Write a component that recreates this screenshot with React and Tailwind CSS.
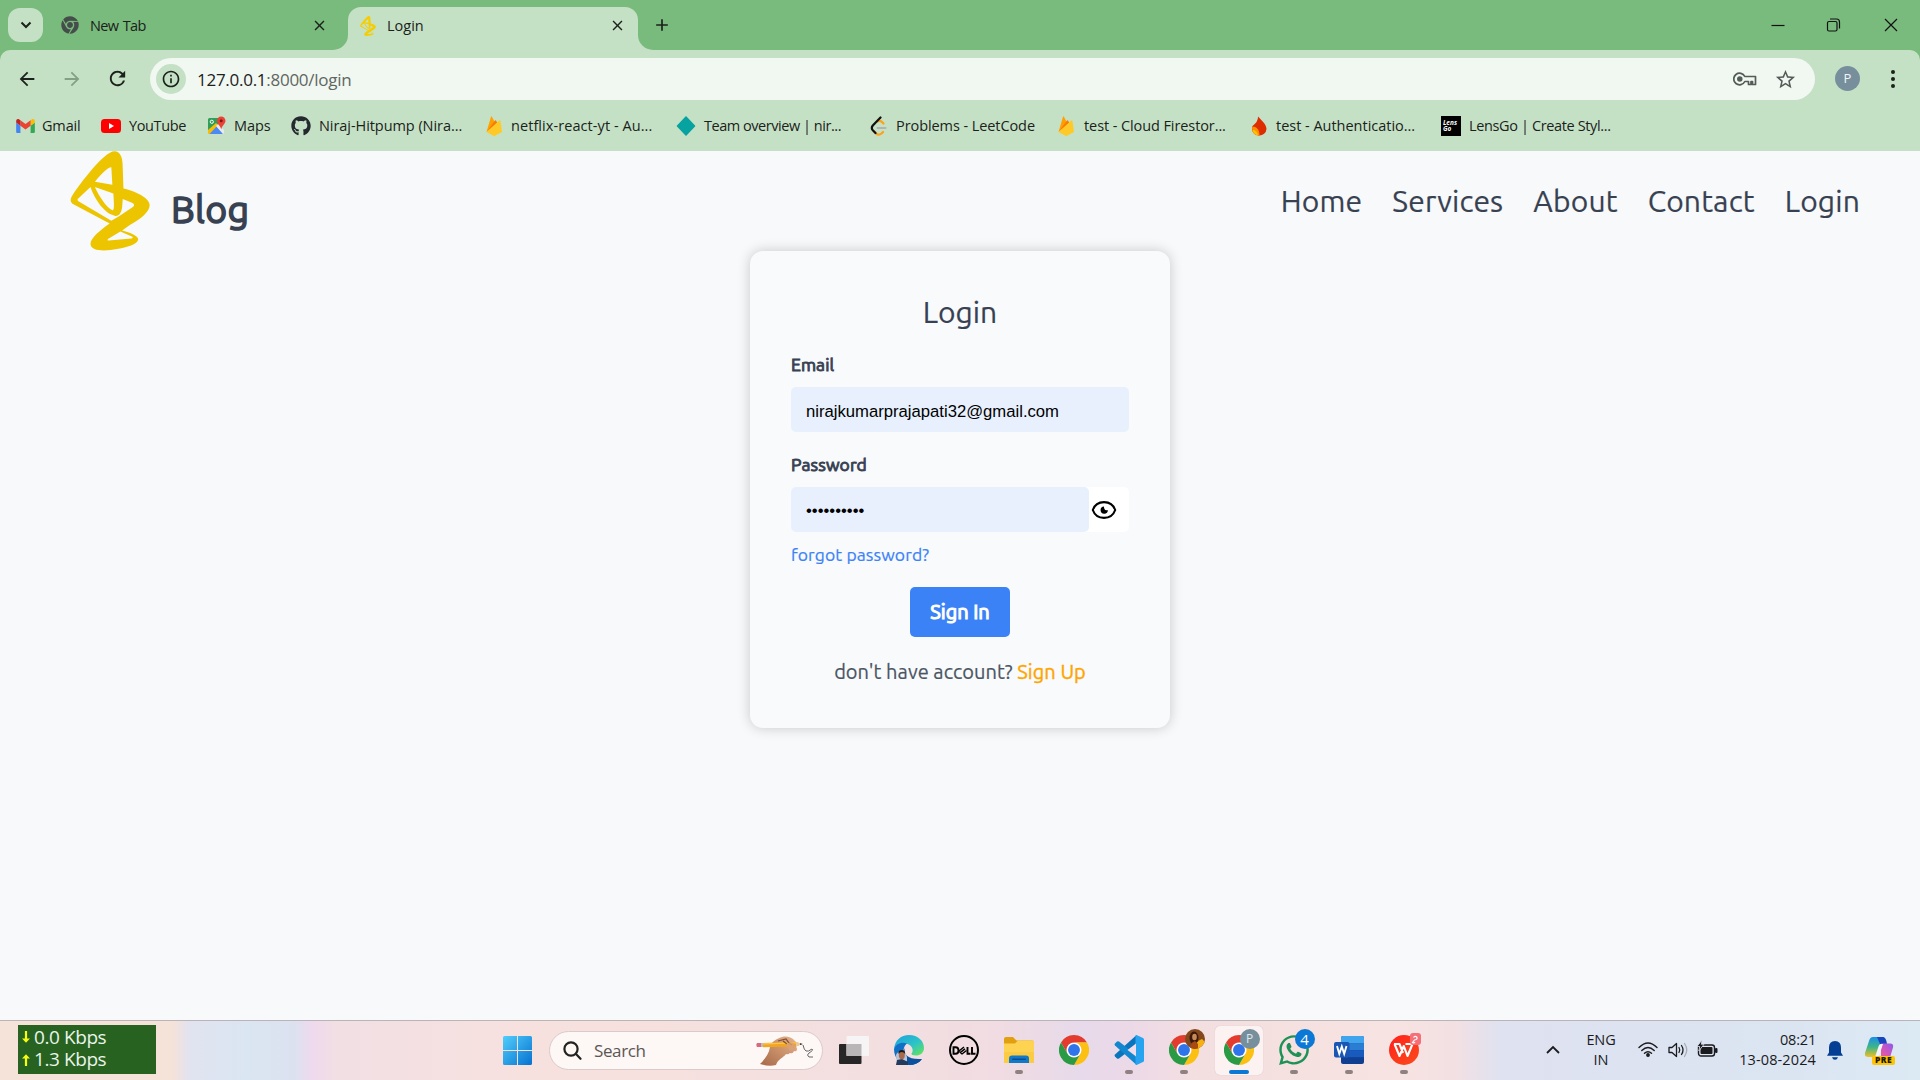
import React from 'react';
import { MdArrowBack, MdArrowForward, MdRefresh, MdInfoOutline, MdStarBorder, MdClose, MdAdd } from 'react-icons/md';
import { FaGithub, FaWhatsapp, FaChrome } from 'react-icons/fa';

const UI = "font-['Open_Sans','Noto_Sans',sans-serif]";

function Chrome({ size = 30 }) {
  return (
    <svg width={size} height={size} viewBox="0 0 48 48">
      <circle cx="24" cy="24" r="12" fill="#fff" />
      <path fill="#e33b2e" d="M24,12H44.7812a23.9939,23.9939,0,0,0-41.5639.0029L13.6079,30l.0093-.0024A11.9852,11.9852,0,0,1,24,12Z" />
      <path fill="#fcc012" d="M34.3913,30.0029,24.0007,48A23.994,23.994,0,0,0,44.78,12.0031H23.9989l-.0025.0093A11.985,11.985,0,0,1,34.3913,30.0029Z" />
      <path fill="#2a9a45" d="M13.6086,30.0031,3.218,12.006A23.994,23.994,0,0,0,24.0025,48L34.3931,30.0029l-.0067-.0068a11.9852,11.9852,0,0,1-20.7778.007Z" />
      <circle cx="24" cy="24" r="9.5" fill="#2f74ea" />
    </svg>
  );
}

function Logo({ color, className }) {
  return (
    <svg viewBox="61 17 238 302" preserveAspectRatio="none" className={className}>
      <path
        fill={color}
        fillRule="evenodd"
        d="M193 18C212 18 218 38 218 70L220 130C258 138 298 160 298 180C298 202 268 224 240 240L216 257C245 264 264 275 264 284C262 300 225 308 200 313C170 319 122 322 122 297C122 281 150 256 179 236L71 178C61 172 61 162 67 153C92 114 163 18 193 18Z
        M184 67C182 63 165 72 135 110L187 119Z
        M135 126C150 158 168 186 187 196C192 197 193 188 190 145Z
        M122 126L84 162Q82 166 86 169L184 228L208 213L248 186Q256 179 247 174L218 162L216 188C213 206 207 214 196 213C165 208 135 165 122 126Z
        M211 260L174 283Q171 287 176 287L244 281Q251 279 245 275Z"
      />
    </svg>
  );
}

function Gmail() {
  return (
    <svg width="19" height="14" viewBox="52 42 88 66">
      <path fill="#4285f4" d="M58 108h14V74L52 59v43c0 3.32 2.69 6 6 6" />
      <path fill="#34a853" d="M120 108h14c3.32 0 6-2.69 6-6V59l-20 15" />
      <path fill="#fbbc04" d="M120 48v26l20-15v-8c0-7.42-8.47-11.65-14.4-7.2" />
      <path fill="#ea4335" d="M72 74V48l24 18 24-18v26L96 92" />
      <path fill="#c5221f" d="M52 51v8l20 15V48l-5.6-4.2c-5.94-4.45-14.4-.22-14.4 7.2" />
    </svg>
  );
}

function YouTube() {
  return (
    <svg width="20" height="14" viewBox="0 0 20 14">
      <rect width="20" height="14" rx="3.5" fill="#f00" />
      <path d="M8 4v6l5-3z" fill="#fff" />
    </svg>
  );
}

function Maps() {
  return (
    <svg width="19" height="19" viewBox="0 0 19 19">
      <path d="M2.500 2H12v6l-4 3-7 6.500V3.500Q1 2 2.500 2z" fill="#2f9e58" />
      <path d="M1 14l8-7 3 3-8.500 8H2.500Q1 18 1 16.500z" fill="#fbbc04" />
      <path d="M9.500 10.500L16 17.500Q15.500 18 14.500 18H2.500z" fill="#4a8af4" />
      <path d="M11 8l6 6v3l-1 1-7-8z" fill="#e8eaed" />
      <circle cx="4.800" cy="5.800" r="1.600" fill="none" stroke="#fff" strokeWidth="1" />
      <path d="M14.200.5a4.300 4.300 0 0 1 4.300 4.300c0 3.200-3.500 4.500-4.300 8.700-.8-4.200-4.300-5.500-4.300-8.700A4.300 4.300 0 0 1 14.200.5z" fill="#ea4335" />
      <circle cx="14.200" cy="4.800" r="1.500" fill="#7b1c14" />
    </svg>
  );
}

function Firebase() {
  return (
    <svg width="16" height="20" viewBox="0 0 16 20">
      <path d="M.5 16L5 .8q.4-.9.900-.1L9 6.500z" fill="#ffa000" />
      <path d="M.5 16L9 4.500q.5-.6 1 0L12 8z" fill="#f57c00" />
      <path d="M.5 16L13.500 4.300q.7-.4.900.3L16 16l-7 3.800q-.8.400-1.600 0z" fill="#ffca28" />
    </svg>
  );
}

function Diamond() {
  return (
    <svg width="20" height="20" viewBox="0 0 20 20">
      <path d="M10 1l8.500 9-8.500 9-8.500-9z" fill="#06a3a0" stroke="#06a3a0" strokeWidth="1.500" strokeLinejoin="round" />
    </svg>
  );
}

function LeetCode() {
  return (
    <svg width="17" height="20" viewBox="0 0 17 20" fill="none" strokeLinecap="round" strokeWidth="2.200">
      <path d="M4 15.500l2.500 2.500Q9 19.500 11.500 17.500L13 16M7 5.500q3-1.500 5 .5l1.500 1.500" stroke="#ffa116" />
      <path d="M10.500 1.500L2.800 9.500Q.8 12 2.800 14.300L5.500 17" stroke="#111" />
      <path d="M7.500 12H15.500" stroke="#b3b3b3" />
    </svg>
  );
}

function Flame() {
  return (
    <svg width="16" height="20" viewBox="0 0 16 20">
      <path d="M7 .5C10 4 15.500 8 15.500 13a7 7 0 0 1-7.500 6.500C3.500 19.500 1 16 1 12.500 1 9 4 8.500 5.500 6 6.500 4 7 2.500 7 .5z" fill="#dd2c00" />
      <path d="M1.200 11c2-1 7.300.5 7.300 8.500C4 19.800.5 16 1.200 11z" fill="#ff9100" />
      <path d="M1.500 14c3 0 5 2 5.500 5.300C4 18.800 2 17 1.500 14z" fill="#ffc400" />
    </svg>
  );
}

function Lens() {
  return (
    <span className="flex h-5 w-5 flex-col justify-center bg-black pl-[2px] text-[6.5px] font-bold italic leading-[6px] text-white">
      <span>Lens</span>
      <span>Go</span>
    </span>
  );
}

const bookmarks = [
  { icon: <Gmail />, cell: 'w-[26px]', item: 'w-[85px]', track: 'tracking-[-0.17px]', text: 'Gmail' },
  { icon: <YouTube />, cell: 'w-[28px]', item: 'w-[106px]', track: 'tracking-[-0.38px]', text: 'YouTube' },
  { icon: <Maps />, cell: 'w-[27px]', item: 'w-[84px]', track: 'tracking-[-0.1px]', text: 'Maps' },
  { icon: <FaGithub size={20} color="#24292f" />, cell: 'w-[28px]', item: 'w-[195px]', track: 'tracking-[-0.06px]', text: 'Niraj-Hitpump (Nira...' },
  { icon: <Firebase />, cell: 'w-[25px]', item: 'w-[190px]', track: 'tracking-[0.07px]', text: 'netflix-react-yt - Au...' },
  { icon: <Diamond />, cell: 'w-[28px]', item: 'w-[194px]', track: 'tracking-[-0.46px]', text: 'Team overview | nir...' },
  { icon: <LeetCode />, cell: 'w-[26px]', item: 'w-[188px]', track: 'tracking-[-0.08px]', text: 'Problems - LeetCode' },
  { icon: <Firebase />, cell: 'w-[26px]', item: 'w-[193px]', track: 'tracking-[-0.09px]', text: 'test - Cloud Firestor...' },
  { icon: <Flame />, cell: 'w-[25px]', item: 'w-[190px]', track: 'tracking-[-0.02px]', text: 'test - Authenticatio...' },
  { icon: <Lens />, cell: 'w-[28px]', item: 'w-[190px]', track: 'tracking-[-0.37px]', text: 'LensGo | Create Styl...' },
];

function TabStrip() {
  return (
    <div className="flex h-[50px] items-end pl-2 text-[#1c211c]">
      <button className="mb-2 flex h-[34px] w-[35px] items-center justify-center rounded-xl bg-[#c5e1c5]">
        <svg width="12" height="8" viewBox="0 0 12 8" fill="none" stroke="#1c211c" strokeWidth="2">
          <path d="M1.500 1.500L6 6l4.500-4.500" />
        </svg>
      </button>
      <div className="flex h-full w-[290px] items-center pl-[18px]">
        <FaChrome size={18} color="#454d4b" />
        <span className="ml-[11px] mt-[2px] text-[14.5px] tracking-[-0.7px] [word-spacing:1.5px]">New Tab</span>
        <MdClose size={17} className="ml-auto mr-[5px]" />
      </div>
      <div className="h-[15px] w-[15px] bg-[#c5e1c5]">
        <div className="h-full w-full rounded-br-[15px] bg-[#79bb7c]" />
      </div>
      <div className="flex h-[43px] w-[290px] items-center rounded-t-[13px] bg-[#c5e1c5] pb-[6px] pl-3">
        <Logo color="#f5cd00" className="h-5 w-4" />
        <span className="ml-[11px] text-[14.5px]">Login</span>
        <MdClose size={17} className="ml-auto mr-[12px]" />
      </div>
      <div className="h-[15px] w-[15px] bg-[#c5e1c5]">
        <div className="h-full w-full rounded-bl-[15px] bg-[#79bb7c]" />
      </div>
      <MdAdd size={20} className="-ml-px mb-[15px]" />
      <div className="ml-auto flex h-full items-center pr-[21px]">
        <svg width="128" height="14" viewBox="0 0 128 14" fill="none" stroke="#111" strokeWidth="1.200">
          <path d="M.5 7.500h13" />
          <rect x="56.500" y="3.500" width="9.500" height="9.500" rx="1.500" />
          <path d="M59 1h6.500q3 0 3 3v6.500" />
          <path d="M114 1l12 12M126 1l-12 12" />
        </svg>
      </div>
    </div>
  );
}

function Toolbar() {
  return (
    <div className="flex h-[57px] items-center pl-4 text-[#1c211c]">
      <MdArrowBack size={22} />
      <MdArrowForward size={22} className="ml-[23px] text-[#83a085]" />
      <MdRefresh size={23} className="ml-[23px]" />
      <div className="ml-[21px] mt-[1px] flex h-[42px] w-[1665px] items-center rounded-full bg-[#f1f7f1] pl-[6px]">
        <div className="flex h-[30px] w-[30px] items-center justify-center rounded-full bg-[#c5e1c5]">
          <MdInfoOutline size={20} />
        </div>
        <div className="ml-[11px] mt-[2px] text-[17px] tracking-[-0.27px] text-[#1c211c]">
          127.0.0.1<span className="text-[#5f6662]">:8000/login</span>
        </div>
        <svg width="24" height="14" viewBox="0 0 24 14" className="ml-auto" fill="none" stroke="#545c57" strokeWidth="1.700">
          <path d="M11.800 4.500A5.800 5.800 0 1 0 11.800 9.500H15.500V12.500H18V9.500H19.500V12.500H22.500V4.500Z" strokeLinejoin="round" />
          <circle cx="6.800" cy="7" r="1.900" fill="#545c57" />
        </svg>
        <MdStarBorder size={23} color="#545c57" className="ml-[17px] mr-[18px]" />
      </div>
      <div className="ml-5 flex h-[25px] w-[25px] items-center justify-center rounded-full bg-[#778f9c] text-[13px] text-[#f0f4f5]">P</div>
      <svg width="6" height="20" viewBox="0 0 6 20" className="ml-[30px]" fill="#1c211c">
        <circle cx="3" cy="3" r="2" />
        <circle cx="3" cy="10" r="2" />
        <circle cx="3" cy="17" r="2" />
      </svg>
    </div>
  );
}

function Bookmarks() {
  return (
    <div className="flex h-[44px] items-center pb-[7px] pl-4 text-[14.5px] text-[#1c211c]">
      {bookmarks.map((b, i) => (
        <div key={i} className={`flex shrink-0 items-center whitespace-nowrap ${b.item}`}>
          <span className={`flex shrink-0 items-center ${b.cell}`}>{b.icon}</span>
          <span className={b.track}>{b.text}</span>
        </div>
      ))}
    </div>
  );
}

function LoginCard() {
  return (
    <form className="mx-auto flex h-[477px] w-[420px] flex-col rounded-[13px] bg-[#f8fafc] px-[41px] pt-[39px] shadow-[0_0_13px_rgba(0,0,0,0.2)]">
      <h1 className="text-center text-[30px] leading-[45px] [-webkit-text-stroke:0.2px]">Login</h1>
      <label className="mt-[17px] text-[17.5px] leading-[26px] tracking-[0.1px] [-webkit-text-stroke:0.9px]">Email</label>
      <input
        readOnly
        value="nirajkumarprajapati32@gmail.com"
        className="mt-[9px] h-[45px] w-[338px] rounded-[5px] bg-[#e8f0fe] px-[15px] pt-[4px] font-['Liberation_Sans',sans-serif] text-[16.67px] text-black outline-none"
      />
      <label className="mt-[20px] text-[17.5px] leading-[26px] tracking-[0.1px] [-webkit-text-stroke:0.9px]">Password</label>
      <div className="mt-[9px] flex h-[45px] w-[338px] items-center rounded-[5px] bg-white">
        <input
          readOnly
          type="password"
          value="0123456789"
          className="h-[45px] w-[298px] rounded-[5px] bg-[#e8f0fe] px-[15px] pt-[2px] font-['Liberation_Sans',sans-serif] text-[16.67px] text-black outline-none"
        />
        <svg width="26" height="20" viewBox="0 0 26 20" className="ml-[2px]">
          <path d="M1.800 10C5.500-.5 20.500-.5 24.200 10 20.500 20.500 5.500 20.500 1.800 10z" fill="none" stroke="#000" strokeWidth="2.100" strokeLinejoin="round" />
          <path d="M13 6.500a3.600 3.600 0 1 0 3.800 3.500q-2.600.6-3.200-.8-.8-1.200-.6-2.700z" fill="#000" />
        </svg>
      </div>
      <a className="mt-[10px] text-[17.5px] leading-[26px] tracking-[0.1px] text-[#3b82f6] [-webkit-text-stroke:0.2px]">forgot password?</a>
      <button type="button" className="mt-[19px] h-[50px] w-[100px] self-center rounded-[5px] bg-[#3b82f6] text-[20px] text-white [-webkit-text-stroke:1.1px]">
        Sign In
      </button>
      <p className="mt-[20px] text-center text-[20px] leading-[30px] tracking-[0.05px] text-[#4b5563] [-webkit-text-stroke:0.2px]">
        don't have account? <a className="text-[#ffa500] [-webkit-text-stroke:0.4px]">Sign Up</a>
      </p>
    </form>
  );
}

function Page() {
  return (
    <main className="h-[869px] bg-[#f7f9fb] font-['Ubuntu','Open_Sans',sans-serif] text-[#374151]">
      <header className="flex h-[100px] items-center pl-[70px] pr-[60px]">
        <Logo color="#ecc500" className="h-[100px] w-[80px]" />
        <span className="ml-[21px] mt-4 text-[37.5px] tracking-[0.3px] [-webkit-text-stroke:1.5px]">Blog</span>
        <nav className="ml-auto flex gap-[30px] text-[30px] tracking-[0.16px] [-webkit-text-stroke:0.2px]">
          <a>Home</a>
          <a>Services</a>
          <a>About</a>
          <a>Contact</a>
          <a>Login</a>
        </nav>
      </header>
      <LoginCard />
    </main>
  );
}

function Folder() {
  return (
    <svg width="30" height="27" viewBox="0 0 30 27">
      <path d="M0 2q0-2 2-2h7l3.500 3.500H28q2 0 2 2V10H0z" fill="#e0a010" />
      <path d="M0 6.500l11 0 3-3H28.500Q30 3.500 30 5V26H0z" fill="#ffd352" />
      <path d="M0 15h30v11H0z" fill="#f7c433" opacity=".5" />
      <path d="M5 26v-4.500q0-3 3-3h14q3 0 3 3V26z" fill="#1278c8" />
      <rect x="8" y="21.500" width="14" height="1.600" rx=".8" fill="#0a4d92" />
    </svg>
  );
}

function VSCode() {
  return (
    <svg width="30" height="30" viewBox="0 0 30 30">
      <path d="M21.500 1L1 19.500q-1 1 0 2l2 2q1 .6 2 0L29 5z" fill="#0a74bd" />
      <path d="M21.500 29L1 10.500q-1-1 0-2l2-2q1-.6 2 0L29 25z" fill="#1187cf" />
      <path d="M21.500.3q.3-.4 1-.2L29 3q1 .6 1 1.600V25.400q0 1-1 1.600l-6.500 2.900q-.7.200-1-.2z" fill="#27a3f0" />
      <path d="M22 8.500v13L13.500 15z" fill="#f0dcea" />
    </svg>
  );
}

function Word() {
  return (
    <svg width="30" height="28" viewBox="0 0 30 28">
      <rect x="7" width="23" height="28" rx="2" fill="#103f91" />
      <path d="M7 2q0-2 2-2h19q2 0 2 2v5.500H7z" fill="#41a5ee" />
      <path d="M7 7.300h23v7H7z" fill="#2b7cd3" />
      <path d="M7 14.200h23v7H7z" fill="#185abd" />
      <rect y="6" width="15.500" height="15.500" rx="2" fill="#1a56b4" />
      <path d="M3 10l2.300 7.800L7.800 10.500l2.400 7.300L12.500 10" fill="none" stroke="#fff" strokeWidth="1.900" />
    </svg>
  );
}

function Edge() {
  return (
    <svg width="30" height="30" viewBox="0 0 30 30">
      <defs>
        <linearGradient id="edgeTop" x1="0" x2="1" y1="0" y2="1">
          <stop offset="0" stopColor="#1d9fe0" />
          <stop offset=".55" stopColor="#2cc3c8" />
          <stop offset="1" stopColor="#6be650" />
        </linearGradient>
      </defs>
      <path d="M0 14C1 5 7 0 15 0c9 0 15 6 15 13 0 5-4 7.500-8 7.500-3 0-5-1-4.500-2 2.500-2.500 1-8-4-9.500C8 8 2 9.500 0 14z" fill="url(#edgeTop)" />
      <path d="M0 14C2 8.500 8 6.500 13 8.500c-4 3-4.500 9-1.500 13 3.500 4.500 10 5.500 16.500 2.500-3 4-7.500 6-13 6C6 30 0 23 0 14z" fill="#0f6fc6" />
      <path d="M11 13c-2 6 3 12 17 11-3 4-7.500 6-13 6-5-2-8-11-4-17z" fill="#0c509e" />
      <path d="M2 20q1-3 4-3h5l2 5v4l-4 4H5q-3-4-3-10z" fill="#b8c4d8" />
      <path d="M2 30l1-5 5-1 6 3v3z" fill="#233b5c" />
      <ellipse cx="7.800" cy="20" rx="3" ry="4.300" fill="#a8694b" />
      <path d="M4.500 19q-.3-4 3.300-4 3.500 0 3.200 4-1-2-3.200-2t-3.300 2z" fill="#1b1717" />
    </svg>
  );
}

function Dell() {
  return (
    <span className="flex h-[30px] w-[30px] items-center justify-center rounded-full border-[2px] border-black">
      <svg width="24" height="9" viewBox="0 0 24 9" fill="none" stroke="#000" strokeWidth="1.900">
        <path d="M1.500 1.200h2q3 0 3 3.300t-3 3.300h-2z" />
        <path d="M7 5l5-4M8.500 6.300l4.500-3.500M10 8l4.500-3.500M7 5l3 3" strokeWidth="1.500" />
        <path d="M15.500 1v6.800h3M20 1v6.800h3.500" />
      </svg>
    </span>
  );
}

function Wps() {
  return (
    <span className="relative flex h-[30px] w-[30px] items-center justify-center rounded-full bg-gradient-to-br from-[#ff1a1a] to-[#fb4a1c]">
      <svg width="21" height="16" viewBox="0 0 21 16" fill="none" stroke="#fff" strokeWidth="2.100" strokeLinejoin="round">
        <path d="M1 2h5.500L10 11M1.500 2L6.500 14 10.800 4l3.700 10L19.500 2H12.500" />
      </svg>
      <span className="absolute -right-[2px] -top-[2px] flex h-3 w-[11px] items-center justify-center rounded-[3px] bg-[#f56f77]">
        <svg width="8" height="9" viewBox="0 0 8 9" fill="none" stroke="#fff" strokeWidth="1.200">
          <path d="M2.500 2.500q1.500-2 3.200-.5Q7 4.500 3.500 5L1.500 7.500q1.500 1 2.500-.5" />
        </svg>
      </span>
    </span>
  );
}

function Pencil() {
  return (
    <svg width="58" height="30" viewBox="0 0 58 30">
      <defs>
        <linearGradient id="skin" x1="1" x2="0" y1="0" y2="1">
          <stop offset="0" stopColor="#e8b48c" />
          <stop offset=".5" stopColor="#c88f68" />
          <stop offset="1" stopColor="#a5694a" />
        </linearGradient>
      </defs>
      <path d="M4 28C9 23 13 18 14 11c1-5 6-8 12-10 5-1 8 0 11 2l4 4q1 2-1 3l1 3q0 3-3 2-1 3-4 2-2 2-4 1c-3 4-8 5-10 11q-7 2-16-1z" fill="url(#skin)" />
      <path d="M4 7l4 0v4l-4 0z" fill="#b9bdc4" />
      <path d="M1 7h4l0 4H1Q-.3 9 1 7z" fill="#d86a7c" />
      <path d="M7 7L40 6l6 2-6 2.500-33 .7z" fill="#f2a51e" />
      <path d="M7 7.200L40 6.200v1.300L7 8.600z" fill="#ffc64d" />
      <path d="M40 6l6 2-6 2.500z" fill="#e8c9a0" />
      <path d="M44 7.300l3 .8-3 1z" fill="#222" />
      <path d="M22 5l8-2 3 4 3 2M27 5l4 3" fill="none" stroke="#7e4e36" strokeWidth="1.200" />
      <path d="M30 8q6-4 10 1l-4 6q-4-1-6-7z" fill="#d9a07a" opacity=".8" />
      <path d="M47 9q1 5 3 6t6-2q2 1-3 4-3 2 0 4l4 0" fill="none" stroke="#555" strokeWidth=".9" />
    </svg>
  );
}

function TaskIcon({ children, active, dot }) {
  return (
    <div className="flex w-[55px] shrink-0 justify-center">
      <div className={`flex h-[49px] w-[48px] flex-col items-center rounded-[5px] pt-[9px] ${active ? 'bg-[#fcf2f2] shadow-[0_0_1px_#c9b5b9]' : ''}`}>
        <div className="relative flex h-[30px] items-center justify-center">{children}</div>
        {active && <span className="mt-[5px] h-1 w-5 rounded-full bg-[#0a78d4]" />}
        {dot && <span className="mt-[5px] h-1 w-2 rounded-full bg-[#8e8180]" />}
      </div>
    </div>
  );
}

function Copilot() {
  return (
    <span className="relative ml-[22px] block h-[28px] w-[30px]">
      <svg width="30" height="26" viewBox="0 0 30 26">
        <defs>
          <linearGradient id="cpA" x1="0" x2="0" y1="0" y2="1">
            <stop offset="0" stopColor="#1c8ee8" />
            <stop offset=".5" stopColor="#3db58a" />
            <stop offset="1" stopColor="#f0c020" />
          </linearGradient>
          <linearGradient id="cpB" x1="0" x2="1" y1="1" y2="0">
            <stop offset="0" stopColor="#f5694f" />
            <stop offset=".5" stopColor="#d855b5" />
            <stop offset="1" stopColor="#8a5cf0" />
          </linearGradient>
        </defs>
        <path d="M8 0h10q2 0 1 3L13 17q-1 3-4 3H3q-4 0-3-4L4 4Q5 0 8 0z" fill="url(#cpA)" />
        <path d="M12 0h6q3 0 4 7h-7z" fill="#1747c0" />
        <path d="M17 7h9q4 0 3 4l-3 10q-1 4-4 4h-9q3 0 4-4z" fill="url(#cpB)" transform="translate(-1 -.5)" />
        <path d="M16 7q-2 0-3 4l-3 9q4 0 5-4l3-9z" fill="#f4f2fb" />
      </svg>
      <span className="absolute bottom-0 right-0 flex h-[9px] w-[23px] items-center justify-center rounded-[2px] bg-[#fdc50a] text-[8.5px] font-extrabold leading-none tracking-[0.4px] text-[#1d1a05]">PRE</span>
    </span>
  );
}

function NetMeter() {
  return (
    <div className="ml-[18px] mt-[4px] h-[49px] w-[138px] bg-[#276221] pl-1 text-[19px] text-[#eaf4ea]">
      <div className="flex h-[24px] items-center leading-[24px]">
        <svg width="8" height="12" viewBox="0 0 8 12" className="mr-[4px]" fill="none" stroke="#f8fb12" strokeWidth="2.200">
          <path d="M4 0v10" />
          <path d="M0 7.500h8L4 11.800z" fill="#f8fb12" stroke="none" />
        </svg>
        <span className="tracking-[-0.42px]">0.0 Kbps</span>
      </div>
      <div className="flex h-[23px] items-center leading-[23px]">
        <svg width="8" height="12" viewBox="0 0 8 12" className="-mt-[2px] mr-[4px]" fill="none" stroke="#f8fb12" strokeWidth="2.200">
          <path d="M4 12V2" />
          <path d="M0 4.500h8L4 .2z" fill="#f8fb12" stroke="none" />
        </svg>
        <span className="-mt-[2px] tracking-[-0.42px]">1.3 Kbps</span>
      </div>
    </div>
  );
}

function Tray() {
  return (
    <div className="ml-auto flex items-center pr-[25px] text-[14.5px] leading-5 text-[#1b1b1e]">
      <svg width="14" height="9" viewBox="0 0 14 9" className="-mt-[2px]" fill="none" stroke="#1b1b1e" strokeWidth="1.800"><path d="M1 8l6-6 6 6" /></svg>
      <div className="-mt-[1px] ml-[26px] w-[30px] text-center tracking-[-0.1px]">
        <div>ENG</div>
        <div>IN</div>
      </div>
      <svg width="20" height="15" viewBox="0 0 20 15" className="-mt-[2px] ml-[22px]" fill="none" stroke="#1b1b1e" strokeWidth="1.400" strokeLinecap="round">
        <path d="M1 5.500q9-9 18 0M3.800 8.500q6.200-6 12.400 0M6.500 11.300q3.500-3.300 7 0" />
        <circle cx="10" cy="13" r="1.200" fill="#1b1b1e" />
      </svg>
      <svg width="20" height="16" viewBox="0 0 20 16" className="-mt-[1px] ml-[10px]" fill="none" stroke="#1b1b1e" strokeWidth="1.300" strokeLinecap="round" strokeLinejoin="round">
        <path d="M1 5.500h3L8.500 1.500v13L4 10.500H1z" />
        <path d="M11 5.500q1.500 2.500 0 5M13.500 3.500q3 4.500 0 9" />
        <path d="M16.500 1.500q4.500 6.500 0 13" stroke="#a9adb8" />
      </svg>
      <svg width="21" height="17" viewBox="0 0 21 17" className="-mt-1 ml-[9px]">
        <rect x="1.500" y="5" width="16" height="11" rx="2.500" fill="none" stroke="#1b1b1e" strokeWidth="1.400" />
        <rect x="3.500" y="7" width="12" height="7" rx="1" fill="#1b1b1e" />
        <rect x="18" y="8" width="2.500" height="5" rx="1" fill="#1b1b1e" />
        <path d="M5 0L0 6.500h2.800L1.800 11 7 4.300H4.300z" fill="#1b1b1e" stroke="#dde3f1" strokeWidth=".8" />
      </svg>
      <div className="-mt-[1px] ml-[17px] w-[81px] whitespace-nowrap text-right">
        <div className="tracking-[-0.2px]">08:21</div>
        <div className="tracking-[0.12px]">13-08-2024</div>
      </div>
      <svg width="16" height="19" viewBox="0 0 16 19" className="-mt-[1px] ml-[11px]" fill="#053f93">
        <path d="M8 0q6 .3 6 6.500v5l2 3.300H0l2-3.300v-5Q2 .3 8 0zM5 16.300h6q-.8 2.500-3 2.500t-3-2.500z" />
      </svg>
      <Copilot />
    </div>
  );
}

function Taskbar() {
  return (
    <footer className="flex h-[60px] border-t border-[#bcb3b6] bg-[linear-gradient(90deg,#f5e3da_0px,#f5e2d8_172px,#e1e3f0_190px,#dae6f2_245px,#dce1f0_295px,#efd9ed_313px,#f1dfe4_335px,#f6e1e0_480px,#f6e1de_600px,#f3dfe0_900px,#f0dce2_1000px,#e7daea_1080px,#ecd9e8_1130px,#f4dfe0_1200px,#f7e3e1_1400px,#f3e0e3_1455px,#dfe2f0_1500px,#dde3f1_1640px,#dbe5f2_1790px,#dceaf4_1920px)]">
      <NetMeter />
      <svg width="29" height="29" viewBox="0 0 29 29" className="ml-[347px] mt-[15px]">
        <defs>
          <linearGradient id="win" x1="0" x2="1" y1="0" y2="1">
            <stop offset="0" stopColor="#52cdfb" />
            <stop offset="1" stopColor="#0572d0" />
          </linearGradient>
        </defs>
        <path fill="url(#win)" d="M1.500 0H14v14H0V1.500Q0 0 1.500 0zM15 0h12.500Q29 0 29 1.500V14H15zM0 15h14v14H1.500Q0 29 0 27.500zM15 15h14v12.500q0 1.500-1.500 1.500H15z" />
      </svg>
      <div className="ml-[17px] mt-[10px] flex h-[39px] w-[274px] items-center rounded-full border border-[#dccaca] bg-[#fdf7f5] pl-[13px]">
        <svg width="19" height="19" viewBox="0 0 19 19" fill="none" stroke="#222" strokeWidth="2.200" strokeLinecap="round">
          <circle cx="8" cy="8" r="6.600" />
          <path d="M13 13l4.500 4.800" />
        </svg>
        <span className="ml-[12px] text-[17px] tracking-[-0.38px] text-[#5c5654]">Search</span>
        <span className="ml-auto mr-[8px]"><Pencil /></span>
      </div>
      <div className="ml-[3px] mt-[5px] flex">
        <TaskIcon>
          <svg width="30" height="28" viewBox="0 0 30 28">
            <rect y="8" width="22.500" height="20" rx="1" fill="#262626" />
            <rect x="7.500" y="0" width="22.500" height="20" rx="1" fill="#f6f4f4" />
            <path d="M7.500 8h15v12h-15z" fill="#b8b6b6" />
          </svg>
        </TaskIcon>
        <TaskIcon><Edge /></TaskIcon>
        <TaskIcon><Dell /></TaskIcon>
        <TaskIcon dot><Folder /></TaskIcon>
        <TaskIcon><Chrome /></TaskIcon>
        <TaskIcon dot><VSCode /></TaskIcon>
        <TaskIcon dot>
          <Chrome />
          <span className="absolute -right-[6px] -top-[6px] h-5 w-5 overflow-hidden rounded-full bg-[#84481c]">
            <svg width="20" height="20" viewBox="0 0 20 20">
              <ellipse cx="9" cy="9" rx="4.500" ry="6.500" fill="#3a1a0c" />
              <ellipse cx="9.500" cy="8" rx="2.300" ry="3.300" fill="#c98a58" />
              <path d="M11 20q-1-8 6-10l3 3v7z" fill="#f6b012" />
              <path d="M5 20q0-6 5-8l3 3v5z" fill="#a84a12" />
            </svg>
          </span>
        </TaskIcon>
        <TaskIcon active>
          <Chrome />
          <span className="absolute -right-[6px] -top-[6px] flex h-5 w-5 items-center justify-center rounded-full bg-[#778f9c] text-[12px] text-[#dfe8ec]">P</span>
        </TaskIcon>
        <TaskIcon dot>
          <FaWhatsapp size={34} color="#1e9256" />
          <span className="absolute -right-[4px] -top-[6px] flex h-5 w-5 items-center justify-center rounded-full bg-[#0a78d4] text-[15px] text-white">4</span>
        </TaskIcon>
        <TaskIcon dot><Word /></TaskIcon>
        <TaskIcon dot><Wps /></TaskIcon>
      </div>
      <Tray />
    </footer>
  );
}

export default function App() {
  return (
    <div className={`h-[1080px] w-[1920px] overflow-hidden ${UI}`}>
      <div className="h-[151px] bg-[#79bb7c]">
        <TabStrip />
        <div className="rounded-t-[10px] bg-[#c5e1c5]">
          <Toolbar />
          <Bookmarks />
        </div>
      </div>
      <Page />
      <Taskbar />
    </div>
  );
}
